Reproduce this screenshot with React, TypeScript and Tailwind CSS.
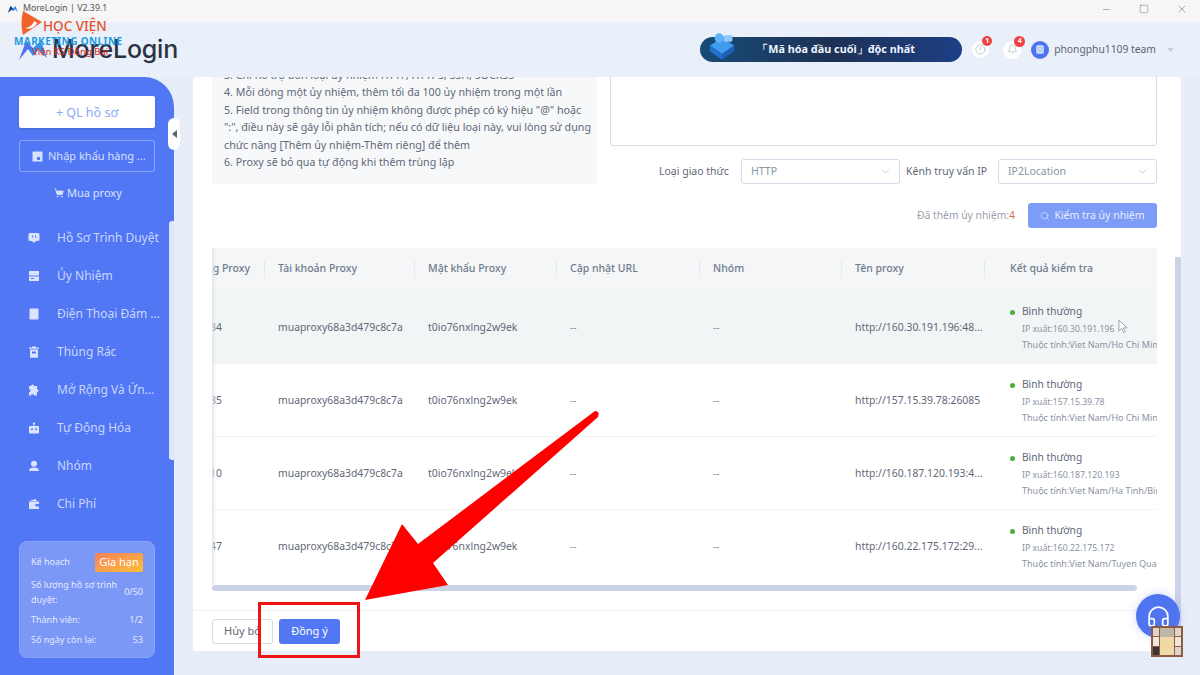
import React from "react";
import { ChevronDown, Minus, Square, X, ShoppingCart, Headphones, Search, Bell, CircleAlert } from "lucide-react";

const nav = ["Hồ Sơ Trình Duyệt", "Ủy Nhiệm", "Điện Thoại Đám ...", "Thùng Rác", "Mở Rộng Và Ứn...", "Tự Động Hóa", "Nhóm", "Chi Phí"];

function NavIcon({ i }: { i: number }) {
  const c = "#dbe4ff";
  const s = { width: 12, height: 12 };
  const paths = [
    <path key="0" fillRule="evenodd" d="M2 1h8a1.5 1.5 0 0 1 1.5 1.5v5A1.5 1.5 0 0 1 10 9H8l-2 2-2-2H2A1.5 1.5 0 0 1 .5 7.5v-5A1.5 1.5 0 0 1 2 1zm2 2.5v2h1v-2zm3 0v2h1v-2z" />,
    <path key="1" fillRule="evenodd" d="M1 1h10v4.5H1zM1 6.5h10V11H1zM3 8v1h3V8z" />,
    <path key="2" d="M2.5 .5h7a1 1 0 0 1 1 1v9a1 1 0 0 1-1 1h-7a1 1 0 0 1-1-1v-9a1 1 0 0 1 1-1z" />,
    <path key="3" fillRule="evenodd" d="M4 .5h4v1h3v1.2H1V1.500h3zM2 3.500h8V11a.8.8 0 0 1-.8.8H2.800A.8.8 0 0 1 2 11zM4 5.500v2h4v-2z" />,
    <path key="4" d="M4.500 .5a1.500 1.500 0 0 1 1.500 1.500h3v3a1.500 1.500 0 1 1 0 3v3.500H6a1.500 1.500 0 1 0-3 0H1V8a1.500 1.500 0 1 0 0-3V2h2A1.500 1.500 0 0 1 4.500 .5z" />,
    <path key="5" fillRule="evenodd" d="M6 .5a1 1 0 0 1 .5 1.900V4H10a1 1 0 0 1 1 1v5.500a1 1 0 0 1-1 1H2a1 1 0 0 1-1-1V5a1 1 0 0 1 1-1h3.500V2.400A1 1 0 0 1 6 .5zM4 6.200a1 1 0 1 0 0 2 1 1 0 0 0 0-2zm4 0a1 1 0 1 0 0 2 1 1 0 0 0 0-2z" />,
    <path key="6" d="M6 .8a3 3 0 1 1 0 6 3 3 0 0 1 0-6zM1 11c0-2.500 2-3.500 5-3.500s5 1 5 3.500z" />,
    <path key="7" d="M7.500 1 9 3H1.500zM1 3.500h10V6H8.500a1.300 1.300 0 0 0 0 2.600H11V11H1z" />,
  ];
  return (
    <svg viewBox="0 0 12 12" style={s} fill={c}>
      {paths[i]}
    </svg>
  );
}

const rows = [
  { port: "34", url: "http://160.30.191.196:48...", ip: "160.30.191.196", loc: "Viet Nam/Ho Chi Minh", bg: "bg-[#f2f5f5]" },
  { port: "85", url: "http://157.15.39.78:26085", ip: "157.15.39.78", loc: "Viet Nam/Ho Chi Minh", bg: "bg-white" },
  { port: "10", url: "http://160.187.120.193:4...", ip: "160.187.120.193", loc: "Viet Nam/Ha Tinh/Binh", bg: "bg-white" },
  { port: "47", url: "http://160.22.175.172:29...", ip: "160.22.175.172", loc: "Viet Nam/Tuyen Quang", bg: "bg-white" },
];

function Select({ value }: { value: string }) {
  return (
    <div className="w-[159px] shrink-0 h-[25px] rounded-[3px] border border-[#d5dbe6] bg-white flex items-center justify-between pl-[9px] pr-[7px] text-[10.500px] text-[#8a93a3]">
      <span>{value}</span>
      <ChevronDown size={13} strokeWidth={1.2} className="text-[#a8afbb]" />
    </div>
  );
}

export default function App() {
  return (
    <div className="relative w-[1200px] h-[675px] overflow-hidden flex flex-col bg-[#e8eef9] text-[#5f6878] font-['Noto_Sans','Liberation_Sans',sans-serif]">
      {/* Title bar */}
      <div className="h-[22px] shrink-0 bg-[#f6f6f6] flex items-center pl-[8px] pr-[12px] pb-[4px]">
        <svg viewBox="0 0 12 9" className="w-[10px] h-[8px] mr-[5px]">
          <path d="M0 9 3 1l3 3 3-3 3 8-3-4-3 2-3-2z" fill="#3a8ee8" />
          <path d="M0 9 3 1l3 3z" fill="#1d3f7a" />
        </svg>
        <span className="text-[8.800px] text-[#555]">MoreLogin | V2.39.1</span>
        <div className="ml-auto flex items-center gap-[27px] text-[#666]">
          <Minus size={11} strokeWidth={1} />
          <Square size={10} strokeWidth={1.1} />
          <X size={12} strokeWidth={1.1} />
        </div>
      </div>

      {/* Header */}
      <div className="h-[55px] shrink-0 flex items-center pl-[19px] pr-[26px] bg-[#eaf0fa]">
        <svg viewBox="0 0 30 24" className="w-[30px] h-[24px] mr-[3px]">
          <path d="M0 22 7 3l7 7 4 8-9-7z" fill="#4f74ef" />
          <path d="M9 11 14 10l8-7 6 17-9-8-5 6z" fill="#3c8fe6" />
        </svg>
        <span className="text-[25px] leading-none font-medium text-[#2a3344] font-['Inter',sans-serif] tracking-[-0.2px]">MoreLogin</span>
        <div className="ml-auto flex items-center">
          <div className="relative w-[262px] h-[25px] rounded-full bg-gradient-to-r from-[#154c78] via-[#1d3154] to-[#1d3f86] flex items-center justify-center pl-[10px] mr-[10px]">
            <span className="text-[10.800px] font-bold text-[#eef4ff] whitespace-nowrap">「Mã hóa đầu cuối」độc nhất</span>
            <svg viewBox="0 0 34 30" className="absolute left-[6px] -top-[5px] w-[32px] h-[29px]">
              <path d="M4 14 17 6l13 8-13 9z" fill="#3f9bf0" />
              <path d="M4 14l13 9v6L4 20z" fill="#2470d0" />
              <path d="M30 14l-13 9v6l13-9z" fill="#1f5fb8" />
              <circle cx="14" cy="6" r="5" fill="#5fb2f8" />
              <rect x="19" y="3" width="9" height="7" rx="1.500" fill="#8cc8fb" />
            </svg>
          </div>
          <div className="relative w-[17px] h-[17px] rounded-full bg-white flex items-center justify-center mr-[14px]">
            <CircleAlert size={11} strokeWidth={1.2} className="text-[#9aa3b0]" />
            <span className="absolute -top-[5px] -right-[3px] w-[10px] h-[10px] rounded-full bg-[#ef4343] text-white text-[7px] font-bold flex items-center justify-center">1</span>
          </div>
          <div className="relative w-[18px] h-[18px] rounded-full bg-white flex items-center justify-center mr-[10px]">
            <Bell size={11} strokeWidth={1.2} className="text-[#9aa3b0]" />
            <span className="absolute -top-[5px] -right-[4px] w-[11px] h-[11px] rounded-full bg-[#ef4343] text-white text-[7px] font-bold flex items-center justify-center">4</span>
          </div>
          <div className="w-[18px] h-[18px] rounded-full bg-[#4f74ef] flex items-center justify-center mr-[5px]">
            <div className="w-[8px] h-[9px] rounded-[2px] bg-[#b9d2f8]" />
          </div>
          <span className="text-[10.300px] text-[#5b6472] whitespace-nowrap">phongphu1109 team</span>
          <svg viewBox="0 0 8 5" className="w-[7px] h-[4px] ml-[11px]"><path d="M0 0h8L4 5z" fill="#c3cad6" /></svg>
        </div>
      </div>

      {/* Body */}
      <div className="flex flex-1 min-h-0">
        <aside className="relative w-[174px] shrink-0 bg-[#5277f4] rounded-tr-[30px] flex flex-col pl-[19px] pr-[19px] pt-[19px]">
          <button className="h-[32px] w-[136px] pt-[3px] rounded-[2px] bg-white text-[12.500px] text-[#8ea6f5] shadow-sm">+ QL hồ sơ</button>
          <div className="mt-[12px] h-[32px] w-[136px] rounded-[3px] border border-[#8aa4f8] flex items-center pl-[12px] text-[11px] text-[#d6e0ff]">
            <svg viewBox="0 0 11 11" className="w-[11px] h-[11px] mr-[5px]" fill="#d6e0ff"><path fillRule="evenodd" d="M1 .5h9a.5.5 0 0 1 .5.500v9a.5.5 0 0 1-.5.5H1a.5.5 0 0 1-.5-.5V1A.5.5 0 0 1 1 .5zM5 6v3h3V6z" /></svg>
            <span className="whitespace-nowrap">Nhập khẩu hàng ...</span>
          </div>
          <div className="mt-[13px] ml-[35px] flex items-center text-[11px] text-[#dbe4ff]">
            <ShoppingCart size={10} fill="#dbe4ff" strokeWidth={1.5} className="mr-[3px]" />
            Mua proxy
          </div>

          <nav className="mt-[17px] flex flex-col -ml-[1px]">
            {nav.map((n, i) => (
              <div key={n} className="h-[38px] flex items-center text-[12px] text-[#c9d6ff] whitespace-nowrap">
                <div className="w-[12px] flex justify-center mr-[17px] ml-[10px]"><NavIcon i={i} /></div>
                {n}
              </div>
            ))}
          </nav>

          <div className="mt-[18px] w-[136px] h-[117px] rounded-[8px] bg-[#7c98f7] border border-[#8ba5f8] px-[11px] pt-[11px] text-[9px] text-[#e3eaff]">
            <div className="flex items-center justify-between h-[19px]">
              <span>Kế hoạch</span>
              <span className="h-[19px] w-[48px] rounded-[2px] bg-gradient-to-br from-[#f77f5a] to-[#fbbf2e] text-white text-[11px] flex items-center justify-center">Gia hạn</span>
            </div>
            <div className="mt-[5px] flex items-center justify-between leading-[15px]">
              <span className="w-[92px]">Số lượng hồ sơ trình duyệt:</span>
              <span>0/50</span>
            </div>
            <div className="mt-[5px] flex justify-between leading-[15px]"><span>Thành viên:</span><span>1/2</span></div>
            <div className="mt-[5px] flex justify-between leading-[15px]"><span>Số ngày còn lại:</span><span>53</span></div>
          </div>

          <div className="absolute right-0 top-[144px] w-[5px] h-[239px] rounded-l-[3px] bg-[#dfe6f8]" />
          <div className="absolute -right-[6px] top-[41px] w-[12px] h-[32px] rounded-[6px] bg-white flex items-center justify-center">
            <svg viewBox="0 0 5 8" className="w-[5px] h-[8px]"><path d="M5 0v8L0 4z" fill="#5c6470" /></svg>
          </div>
        </aside>

        <main className="flex-1 min-w-0 pl-[19px] pr-[19px] pb-[24px]">
          <div className="relative h-full rounded-[4px] bg-white flex flex-col overflow-hidden pl-[19px] pr-[24px]">
            {/* top row */}
            <div className="flex gap-[13px] h-[107px] shrink-0">
              <div className="w-[386px] h-full bg-[#f7f8fa] pl-[12px] text-[10.700px] leading-[17.400px] text-[#5f6878] overflow-hidden">
                <div className="-mt-[10px] whitespace-nowrap">3. Chỉ hỗ trợ bốn loại ủy nhiệm HTTP, HTTPS, SSH, SOCKS5</div>
                <div>4. Mỗi dòng một ủy nhiệm, thêm tối đa 100 ủy nhiệm trong một lần</div>
                <div className="w-[368px]">5. Field trong thông tin ủy nhiệm không được phép có ký hiệu "@" hoặc ":", điều này sẽ gây lỗi phân tích; nếu có dữ liệu loại này, vui lòng sử dụng chức năng [Thêm ủy nhiệm-Thêm riêng] để thêm</div>
                <div>6. Proxy sẽ bỏ qua tự động khi thêm trùng lặp</div>
              </div>
              <div className="flex-1 flex flex-col">
                <div className="h-[69px] rounded-b-[4px] border border-t-0 border-[#d5dbe6]" />
                <div className="mt-[13px] flex items-center">
                  <span className="ml-[49px] w-[82px] shrink-0 text-[10.500px] text-[#5f6878]">Loại giao thức</span>
                  <Select value="HTTP" />
                  <span className="ml-[6px] w-[92px] shrink-0 text-[10.500px] text-[#5f6878] whitespace-nowrap">Kênh truy vấn IP</span>
                  <Select value="IP2Location" />
                </div>
              </div>
            </div>

            {/* count + button */}
            <div className="mt-[19px] flex items-center justify-end h-[25px] shrink-0">
              <span className="text-[10.300px] text-[#98a0ad] mr-[13px]">Đã thêm ủy nhiệm:<span className="text-[#e0685c]">4</span></span>
              <button className="w-[129px] h-[25px] rounded-[3px] bg-[#7d9cf8] text-[#e6edff] text-[10.500px] flex items-center justify-center gap-[4px]">
                <Search size={10} strokeWidth={1.5} />
                Kiểm tra ủy nhiệm
              </button>
            </div>

            {/* table */}
            <div className="relative mt-[20px] shrink-0">
              <div className="h-[42px] bg-[#f4f6f7] flex items-center text-[10.500px] font-medium text-[#6f7b8c]">
                <div className="w-[53px] h-[18px] overflow-hidden flex justify-end items-center border-r border-[#e6e9ec] pr-[14px] whitespace-nowrap">Cổng Proxy</div>
                <div className="w-[150px] h-[18px] pl-[13px] border-r border-[#e6e9ec] flex items-center">Tài khoản Proxy</div>
                <div className="w-[142px] h-[18px] pl-[13px] border-r border-[#e6e9ec] flex items-center">Mật khẩu Proxy</div>
                <div className="w-[143px] h-[18px] pl-[13px] border-r border-[#e6e9ec] flex items-center">Cập nhật URL</div>
                <div className="w-[142px] h-[18px] pl-[13px] border-r border-[#e6e9ec] flex items-center">Nhóm</div>
                <div className="w-[143px] h-[18px] pl-[13px] border-r border-[#e6e9ec] flex items-center">Tên proxy</div>
                <div className="pl-[25px] flex items-center">Kết quả kiểm tra</div>
              </div>
              {rows.map((r, idx) => (
                <div key={idx} className={`${r.bg} h-[73px] pt-[2px] border-t border-[#f0f2f4] flex items-center text-[10.400px] text-[#5f6878]`}>
                  <div className="w-[53px] flex justify-end pr-[43px] whitespace-nowrap overflow-hidden">{r.port}</div>
                  <div className="w-[150px] pl-[13px] whitespace-nowrap overflow-hidden">muaproxy68a3d479c8c7a</div>
                  <div className="w-[142px] pl-[13px] whitespace-nowrap overflow-hidden">t0io76nxlng2w9ek</div>
                  <div className="w-[143px] pl-[13px] text-[#8a93a3]">--</div>
                  <div className="w-[142px] pl-[13px] text-[#8a93a3]">--</div>
                  <div className="w-[143px] pl-[13px] whitespace-nowrap overflow-hidden">{r.url}</div>
                  <div className="flex-1 min-w-0 pl-[25px] overflow-hidden whitespace-nowrap -mt-[2px]">
                    <div className="flex items-center h-[17px] text-[10.200px] mt-[1px]">
                      <span className="w-[5px] h-[5px] rounded-full bg-[#4caf3c] mr-[7px]" />
                      Bình thường
                    </div>
                    <div className="ml-[12px] text-[8.700px] leading-[15px] mt-[1px] text-[#8a93a3]">IP xuất:{r.ip}</div>
                    <div className="ml-[12px] text-[9px] leading-[15px] text-[#8a93a3]">Thuộc tính:{r.loc}</div>
                  </div>
                </div>
              ))}
              <div className="mt-[3px] w-[925px] h-[6px] rounded-full bg-[#cdd3e6]" />
              <div className="absolute left-0 top-0 bottom-[6px] w-[4px] bg-gradient-to-r from-[#e2e4e8] to-transparent" />
            </div>

            {/* footer */}
            <div className="mt-[19px] -ml-[19px] -mr-[24px] border-t border-[#eef0f3] pl-[19px] pt-[8px] flex gap-[6px]">
              <button className="w-[61px] h-[25px] rounded-[3px] border border-[#d5dbe6] bg-white text-[11px] text-[#5f6878]">Hủy bỏ</button>
              <button className="w-[61px] h-[25px] rounded-[3px] bg-[#5277f4] text-white text-[11px]">Đồng ý</button>
            </div>

            {/* page scrollbar */}
            <div className="absolute right-0 top-[180px] bottom-0 w-[6px] bg-[#cdd3e6]" />
          </div>
        </main>
      </div>

      {/* watermark */}
      <div className="absolute left-[14px] top-[11px] w-[110px] h-[50px] pointer-events-none">
        <svg viewBox="0 0 22 24" className="absolute left-[7px] top-0 w-[22px] h-[24px]">
          <path d="M2 0 21 11 2 24C0 16 0 8 2 0z" fill="#f2622b" />
          <path d="M4 17c4 0 8-3 9-7l3 2c-2 4-7 7-12 5z" fill="#fff" />
        </svg>
        <span className="absolute left-[29px] top-[8px] text-[13.500px] leading-[14px] font-medium text-[#e8502a] whitespace-nowrap">HỌC VIỆN</span>
        <span className="absolute left-0 top-[24px] text-[10px] leading-[12px] font-bold text-[#1b9be0] whitespace-nowrap tracking-[0.4px]">MARKETING ONLINE</span>
        <span className="absolute left-[18px] top-[36px] text-[9.500px] leading-[10px] text-[#d92b22] whitespace-nowrap">Viện KS Đồng Bài</span>
      </div>

      {/* red frame */}
      <div className="absolute left-[258px] top-[602px] w-[102px] h-[56px] border-[3px] border-[#f01414]" />

      {/* arrow */}
      <svg viewBox="0 0 1200 675" className="absolute inset-0 w-[1200px] h-[675px] pointer-events-none">
        <path d="M365 600 402 524 418 544 595 411Q600 411 598 417L433 563 448 585z" fill="#fe0000" />
      </svg>

      {/* cursor */}
      <svg viewBox="0 0 12 16" className="absolute left-[1118px] top-[319px] w-[11px] h-[15px]">
        <path d="M1 1v12l3-3 2 4.500 2-1-2-4h4z" fill="#fff" stroke="#7d8694" strokeWidth="0.800" />
      </svg>

      {/* help */}
      <div className="absolute left-[1136px] top-[594px] w-[44px] h-[44px] rounded-full bg-[#4f74ef] flex items-center justify-center shadow-[0_0_8px_rgba(82,119,244,0.3)]">
        <Headphones size={25} strokeWidth={1.600} className="text-white" />
      </div>

      {/* thumbnail */}
      <div className="absolute left-[1151px] top-[626px] w-[32px] h-[31px] bg-[#8e5a45] p-[2px] flex gap-[1px]">
        <div className="w-[6px] flex flex-col gap-[1px]">
          <div className="flex-1 bg-[#dcd6cc]" /><div className="flex-1 bg-[#eee8dc]" /><div className="flex-1 bg-[#3c3632]" />
        </div>
        <div className="flex-1 bg-[#f0d9a6] flex flex-col gap-[1px]">
          <div className="h-[9px] bg-[#bfb7a5]" /><div className="flex-1" />
        </div>
        <div className="w-[6px] flex flex-col gap-[1px]">
          <div className="flex-1 bg-[#dcd6cc]" /><div className="flex-1 bg-[#eee8dc]" /><div className="flex-1 bg-[#dcd6cc]" />
        </div>
      </div>
    </div>
  );
}
